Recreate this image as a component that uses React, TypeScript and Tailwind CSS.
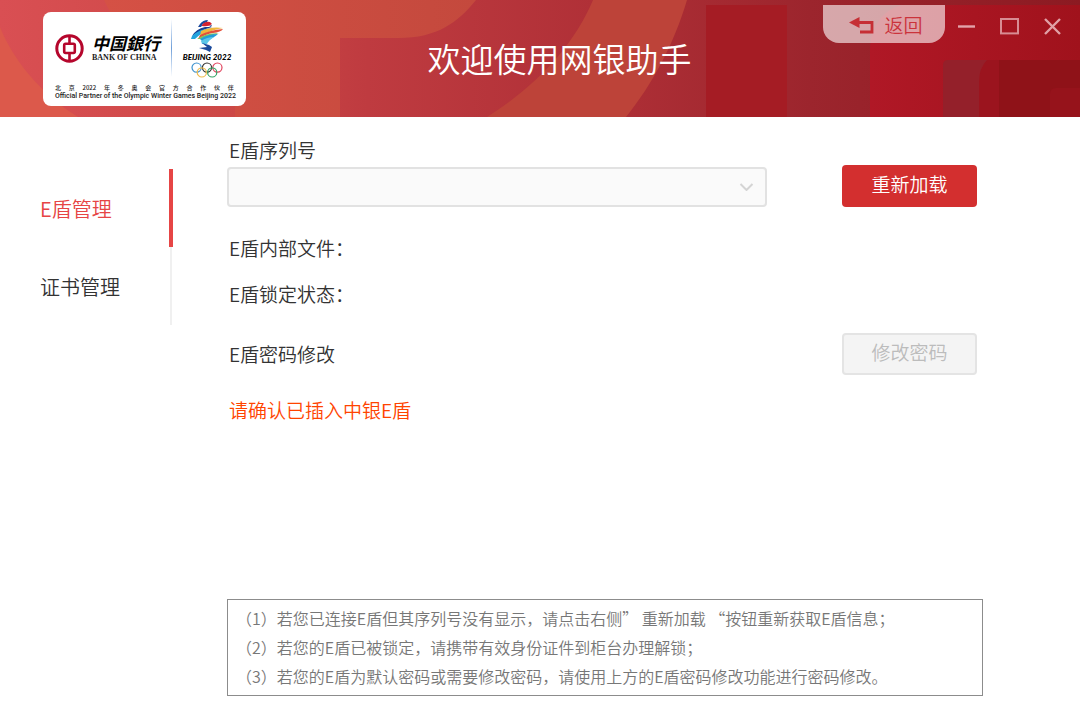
import { useState } from "react";

const navItems = ["E盾管理", "证书管理"];

const notices = [
  "（1）若您已连接E盾但其序列号没有显示，请点击右侧” 重新加载 “按钮重新获取E盾信息；",
  "（2）若您的E盾已被锁定，请携带有效身份证件到柜台办理解锁；",
  "（3）若您的E盾为默认密码或需要修改密码，请使用上方的E盾密码修改功能进行密码修改。",
];

const partnerWords = ["北", "京", "2022", "年", "冬", "奥", "会", "官", "方", "合", "作", "伙", "伴"];

function HeaderBackdrop() {
  return (
    <svg
      className="absolute inset-0 h-full w-full"
      viewBox="0 0 1080 117"
      preserveAspectRatio="none"
      aria-hidden="true"
    >
      <defs>
        <linearGradient id="base" x1="0" x2="1" y1="0" y2="0">
          <stop offset="0" stopColor="#d94f53" />
          <stop offset="0.22" stopColor="#cc4846" />
          <stop offset="0.34" stopColor="#bf3b40" />
          <stop offset="0.55" stopColor="#b03037" />
          <stop offset="0.75" stopColor="#9c252d" />
          <stop offset="1" stopColor="#8c1a22" />
        </linearGradient>
        <linearGradient id="warm" x1="0" x2="1" y1="0" y2="0">
          <stop offset="0" stopColor="#d55145" />
          <stop offset="1" stopColor="#c4493d" />
        </linearGradient>
        <linearGradient id="bright" x1="0" x2="1" y1="0" y2="0">
          <stop offset="0" stopColor="#b01826" />
          <stop offset="1" stopColor="#a0121c" />
        </linearGradient>
      </defs>
      <rect width="1080" height="117" fill="url(#base)" />
      <path d="M0 27C13 60 41 94 78 117H0Z" fill="#dc594b" />
      <path
        d="M104 0C124 42 166 86 235 104V117H340V38H398C438 38 458 22 476 0Z"
        fill="url(#warm)"
      />
      <path d="M593 0H687C674 44 652 85 626 117H487C536 86 573 47 593 0Z" fill="#bd4339" />
      <rect x="706" y="5" width="81" height="112" fill="#a51c24" />
      <path d="M870 117V50C870 28 882 10 902 5H1080V117Z" fill="url(#bright)" />
      <path d="M943 117V65Q943 60 948 60H1080V117Z" fill="#94202a" />
      <path d="M979 117V82Q979 68 987 60H1080V117Z" fill="#9b141e" />
      <rect x="999" y="60" width="81" height="57" fill="#8f1218" />
      <path d="M1050 117V94Q1050 88 1056 88H1080V117Z" fill="#96131b" />
    </svg>
  );
}

function BankMark() {
  return (
    <svg className="h-[29px] w-[29px]" viewBox="0 0 29 29" fill="none" stroke="#b5062c" aria-hidden="true">
      <circle cx="14.5" cy="14.5" r="12.7" strokeWidth="3" />
      <path d="M14.5 2V10M14.5 19V27" strokeWidth="2.6" />
      <rect x="9.2" y="9.8" width="10.6" height="9.2" rx="1.4" strokeWidth="2.6" />
    </svg>
  );
}

function GamesMark() {
  return (
    <svg className="h-[34px] w-[34px]" viewBox="0 0 34 34" aria-hidden="true">
      <path d="M10 5Q13 1 18 1L17 3L13 5L11 8L8 8Z" fill="#1b4a9c" />
      <path d="M12 6Q15 2 20 3L22 5Q19 8 12 7Z" fill="#d3222f" />
      <path d="M19 7L22 6L21 8Z" fill="#2a3c86" />
      <path d="M2 17Q6 10 15 8L22 8Q11 11 2 17Z" fill="#173f92" />
      <path d="M2 17Q9 10 21 9Q11 14 5 20L1 20Z" fill="#22a3dc" />
      <path d="M11 12Q21 7 33 9Q24 10 10 17Z" fill="#f0b63c" />
      <path d="M10 16Q20 11 33 10Q31 13 23 14Q16 15 8 20Z" fill="#e3503a" />
      <path d="M7 20Q15 14 29 14Q22 16 16 20Z" fill="#7cc35c" />
      <path d="M10 20Q18 15 28 15Q24 19 13 23Z" fill="#249bd8" />
      <path d="M11 22Q17 18 24 18Q18 22 17 25L12 25Z" fill="#5bc6e8" />
      <path d="M12 24L19 26L22 28L20 33L16 31L9 29L17 28Z" fill="#1b4a9c" />
    </svg>
  );
}

function Rings() {
  return (
    <svg className="h-4 w-8" viewBox="0 0 32 16" fill="none" strokeWidth="1.2" aria-hidden="true">
      <circle cx="5.6" cy="5.6" r="4.6" stroke="#3d92cf" />
      <circle cx="16" cy="5.6" r="4.6" stroke="#333333" />
      <circle cx="26.4" cy="5.6" r="4.6" stroke="#e0425c" />
      <circle cx="10.8" cy="10.4" r="4.6" stroke="#f0bc4e" />
      <circle cx="21.2" cy="10.4" r="4.6" stroke="#35a365" />
    </svg>
  );
}

function LogoCard() {
  return (
    <div className="relative ml-[43px] mt-3 flex h-[94px] flex-col rounded-lg bg-white px-3 pt-1.5 text-[#222222]">
      <div className="flex h-[60px] items-center">
        <BankMark />
        <div className="ml-2 w-[67px] whitespace-nowrap">
          <p className="text-[17px] font-bold italic leading-5 text-black">中国銀行</p>
          <p className="font-['Liberation_Serif',serif] text-[8px] font-bold leading-[10px]">
            BANK OF CHINA
          </p>
        </div>
        <div className="ml-3 h-[58px] w-px bg-gradient-to-b from-white via-[#6f9fd8] to-white" />
        <div className="ml-2 flex w-[54px] flex-col items-center">
          <GamesMark />
          <p className="whitespace-nowrap font-['Lato',sans-serif] text-[8px] font-black italic leading-[9px] text-black">
            BEIJING 2022
          </p>
          <Rings />
        </div>
      </div>
      <p className="mt-1.5 flex justify-between text-[6px] font-medium leading-2">
        {partnerWords.map((word) => (
          <span key={word}>{word}</span>
        ))}
      </p>
      <p className="whitespace-nowrap font-['Roboto',sans-serif] text-[7px] font-medium leading-2">
        Official Partner of the Olympic Winter Games Beijing 2022
      </p>
    </div>
  );
}

function WindowControls() {
  return (
    <div className="relative mt-[5px] flex items-start pr-1.5">
      <button
        type="button"
        className="flex h-[38px] w-[122px] items-center justify-center gap-2.5 rounded-b-2xl bg-white/60 pl-1 pt-0.5 text-[19px] text-[#cb333b]"
      >
        <svg className="h-[17px] w-[25px]" viewBox="0 0 25 17" aria-hidden="true">
          <path d="M0 5.5L10.5 0V11Z" fill="#c62f35" />
          <path d="M10 5.5H23V15H11" fill="none" stroke="#c62f35" strokeWidth="2.8" />
        </svg>
        返回
      </button>
      <button type="button" aria-label="最小化" className="flex h-[42px] w-[43px] items-center justify-center">
        <svg className="h-[19px] w-[19px]" viewBox="0 0 19 19" fill="none" stroke="#e3a3a9" strokeWidth="2.4" aria-hidden="true">
          <path d="M1 9.5H18" />
        </svg>
      </button>
      <button type="button" aria-label="最大化" className="flex h-[42px] w-[43px] items-center justify-center">
        <svg className="h-[19px] w-[19px]" viewBox="0 0 19 19" fill="none" stroke="#d88c93" strokeWidth="2" aria-hidden="true">
          <rect x="1" y="2" width="17" height="14.4" />
        </svg>
      </button>
      <button type="button" aria-label="关闭" className="flex h-[42px] w-[43px] items-center justify-center">
        <svg className="h-[19px] w-[19px]" viewBox="0 0 19 19" fill="none" stroke="#e0a0a5" strokeWidth="2.4" aria-hidden="true">
          <path d="M2 2L17 17M17 2L2 17" />
        </svg>
      </button>
    </div>
  );
}

export default function App() {
  const [active, setActive] = useState(navItems[0]);

  return (
    <div className="flex min-h-screen flex-col bg-white font-['Noto_Sans_CJK_SC',sans-serif] font-[350] text-[#333333]">
      <header className="relative grid h-[117px] grid-cols-[246px_1fr_auto] items-start">
        <HeaderBackdrop />
        <LogoCard />
        <h1 className="relative mt-[34px] whitespace-nowrap pl-[50px] text-center text-[33px] font-[350] leading-12 text-white">
          欢迎使用网银助手
        </h1>
        <WindowControls />
      </header>

      <div className="flex flex-1">
        <nav className="mt-[52px] w-[173px] shrink-0">
          {navItems.map((item) => (
            <button
              key={item}
              type="button"
              onClick={() => setActive(item)}
              className={
                item === active
                  ? "block h-[78px] w-full border-r-4 border-[#e64545] pl-10 pt-0.5 text-left text-xl text-[#e64545]"
                  : "block h-[78px] w-[172px] border-r-2 border-[#f0f0f0] pl-10 pt-0.5 text-left text-xl"
              }
            >
              {item}
            </button>
          ))}
        </nav>

        <main className="flex flex-1 flex-col pb-6 pl-[54px] pr-[97px] pt-5 text-[19px] leading-[26px]">
          <label htmlFor="serial" className="pl-0.5">
            E盾序列号
          </label>
          <div className="mr-1.5 mt-0.5 flex items-end gap-[75px]">
            <div className="relative flex-1">
              <select
                id="serial"
                className="block h-10 w-full appearance-none rounded border-2 border-[#e2e2e2] bg-[#fafafa] px-3"
              >
                <option value=""></option>
              </select>
              <svg
                className="pointer-events-none absolute right-[13px] top-4 h-2 w-[15px]"
                viewBox="0 0 15 8"
                fill="none"
                stroke="#d4d4d4"
                strokeWidth="2"
                aria-hidden="true"
              >
                <path d="M1.5 1L7.5 7L13.5 1" />
              </svg>
            </div>
            <button type="button" className="h-[42px] w-[135px] rounded bg-[#d32f2f] pb-1 text-white">
              重新加载
            </button>
          </div>

          <p className="mt-7 pl-0.5">E盾内部文件：</p>
          <p className="mt-5 pl-0.5">E盾锁定状态：</p>

          <div className="mr-1.5 mt-[26px] flex items-center justify-between pl-0.5">
            <p>E盾密码修改</p>
            <button
              type="button"
              disabled
              className="h-[42px] w-[135px] rounded border-2 border-[#e4e4e4] bg-[#f4f4f4] pb-1 text-[#bcbcbc]"
            >
              修改密码
            </button>
          </div>

          <p className="mt-[22px] pl-0.5 text-[#ff4400]">请确认已插入中银E盾</p>

          <div className="mt-auto border border-[#8c8c8c] py-1 pl-2 text-base leading-[29px] text-[#777777]">
            {notices.map((notice) => (
              <p key={notice}>{notice}</p>
            ))}
          </div>
        </main>
      </div>
    </div>
  );
}
